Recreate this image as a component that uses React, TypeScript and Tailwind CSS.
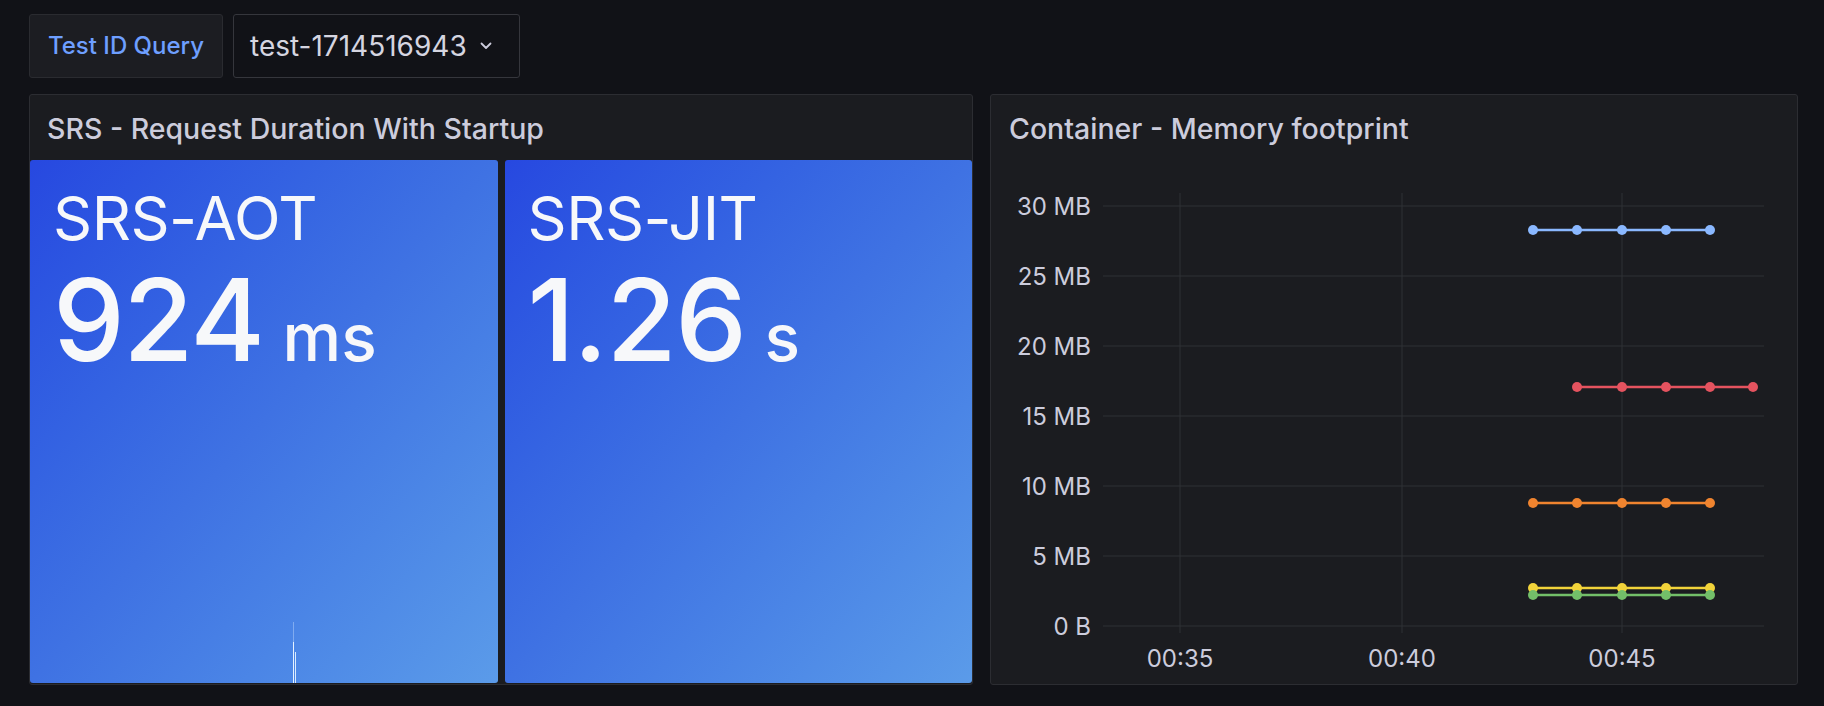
import React from "react"

const font = { fontFamily: "Inter, 'Noto Sans', sans-serif" }

const yTicks = [
  { label: "30 MB", y: 46 },
  { label: "25 MB", y: 116 },
  { label: "20 MB", y: 186 },
  { label: "15 MB", y: 256 },
  { label: "10 MB", y: 326 },
  { label: "5 MB", y: 396 },
  { label: "0 B", y: 466 },
]

const xTicks = [
  { label: "00:35", x: 189 },
  { label: "00:40", x: 411 },
  { label: "00:45", x: 631 },
]

const series = [
  { color: "#8ab8ff", y: 70, xs: [542, 586, 631, 675, 719] },
  { color: "#e5535f", y: 227, xs: [586, 631, 675, 719, 762] },
  { color: "#f0842f", y: 343, xs: [542, 586, 631, 675, 719] },
  { color: "#f2d33a", y: 428, xs: [542, 586, 631, 675, 719] },
  { color: "#73bf69", y: 435, xs: [542, 586, 631, 675, 719] },
]

function StatTile({ name, value, unit }: { name: string; value: string; unit: string }) {
  return (
    <div className="relative flex-1 rounded-[3px] bg-linear-to-br from-[#2748e0] via-[#3f72e3] to-[#5b9be9] pl-[23px] pt-[28px] text-[#f7f8fa]">
      <div className="text-[61px] leading-none font-normal tracking-[-0.5px]">{name}</div>
      <div className="mt-[14px] flex items-baseline leading-none">
        <span className="text-[114px] font-medium tracking-[-1.5px]">{value}</span>
        <span className="ml-[19px] text-[66px] font-medium">{unit}</span>
      </div>
    </div>
  )
}

function MemoryChart() {
  return (
    <svg width="806" height="524" className="block">
      {yTicks.map((t) => (
        <g key={t.label}>
          <line x1="112" x2="773" y1={t.y} y2={t.y} stroke="#2f3035" strokeWidth="1" />
          <text x="100" y={t.y} textAnchor="end" dominantBaseline="central" fill="#ccccdc" fontSize="24" style={font}>
            {t.label}
          </text>
        </g>
      ))}
      {xTicks.map((t) => (
        <g key={t.label}>
          <line x1={t.x} x2={t.x} y1="33" y2="473" stroke="#2f3035" strokeWidth="1" />
          <text x={t.x} y="498" textAnchor="middle" dominantBaseline="central" fill="#ccccdc" fontSize="24" style={font}>
            {t.label}
          </text>
        </g>
      ))}
      {series.map((s) => (
        <g key={s.color}>
          <line x1={s.xs[0]} x2={s.xs[s.xs.length - 1]} y1={s.y} y2={s.y} stroke={s.color} strokeWidth="2.5" />
          {s.xs.map((x) => (
            <circle key={x} cx={x} cy={s.y} r="5" fill={s.color} />
          ))}
        </g>
      ))}
    </svg>
  )
}

export default function App() {
  return (
    <div className="w-[1824px] h-[706px] overflow-hidden bg-[#111217] pl-[29px] pt-[14px]" style={font}>
      {/* variables bar */}
      <div className="flex gap-[10px]">
        <div className="flex h-[64px] w-[194px] items-center justify-center rounded-[3px] border border-[#2a2b30] bg-[#1c1d22] text-[24px] font-medium text-[#6e9fff]">
          Test ID Query
        </div>
        <div className="flex h-[64px] w-[287px] items-center rounded-[3px] border border-[#35363c] bg-[#111217] pl-[16px] text-[28px] text-[#d5d5e0]">
          test-1714516943
          <svg className="ml-[13px]" width="12" height="8" viewBox="0 0 12 8">
            <path d="M1.5 1.5 L6 6 L10.5 1.5" fill="none" stroke="#ccccdc" strokeWidth="1.8" strokeLinecap="round" strokeLinejoin="round" />
          </svg>
        </div>
      </div>

      {/* panels */}
      <div className="mt-[16px] flex gap-[17px]">
        <div className="flex h-[591px] w-[944px] flex-col rounded-[3px] border border-[#2c2d32] bg-[#1b1c20]">
          <div className="flex h-[65px] items-center pl-[17px] pt-[3px] text-[28.5px] font-medium text-[#ccccdc]">
            SRS - Request Duration With Startup
          </div>
          <div className="flex flex-1 gap-[7px] pb-px">
            <div className="relative flex flex-1">
              <StatTile name="SRS-AOT" value="924" unit="ms" />
              {/* sparkline spike */}
              <div className="absolute bottom-0 left-[263px] h-[61px] w-px bg-[#cfe3ff]/40" />
              <div className="absolute bottom-0 left-[263px] h-[41px] w-px bg-[#e6f2ff]" />
              <div className="absolute bottom-0 left-[265px] h-[31px] w-px bg-[#d9ebff]" />
            </div>
            <div className="flex flex-1">
              <StatTile name="SRS-JIT" value="1.26" unit="s" />
            </div>
          </div>
        </div>

        <div className="flex h-[591px] w-[808px] flex-col rounded-[3px] border border-[#2c2d32] bg-[#1b1c20]">
          <div className="flex h-[65px] items-center pl-[18px] pt-[3px] text-[28.5px] font-medium text-[#ccccdc]">
            Container - Memory footprint
          </div>
          <MemoryChart />
        </div>
      </div>
    </div>
  )
}
